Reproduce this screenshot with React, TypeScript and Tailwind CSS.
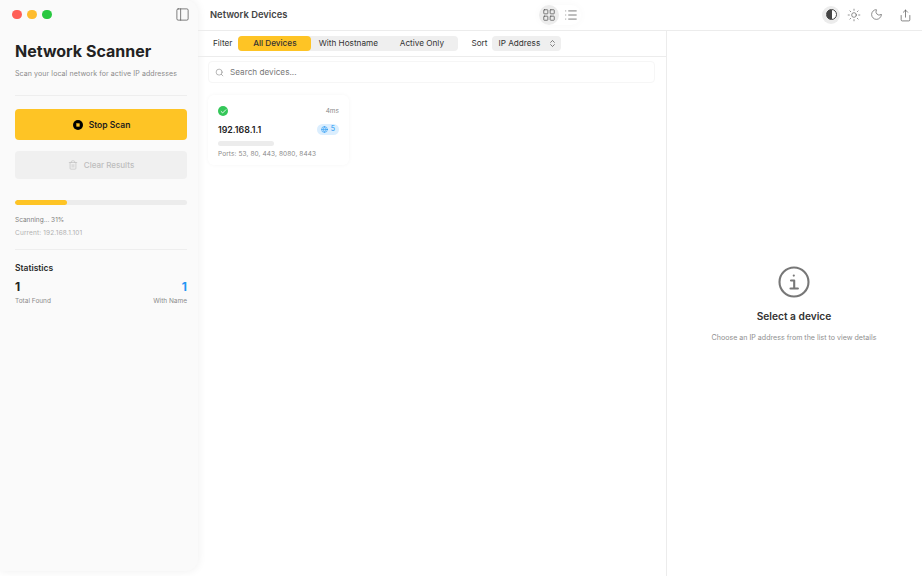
import { Check, ChevronsUpDown, Globe, LayoutGrid, List, Moon, PanelLeft, Search, Share, Square, Sun, Trash2 } from 'lucide-react';

function Sidebar() {
  return (
    <aside className="flex h-[571px] w-[198px] shrink-0 flex-col rounded-r-xl bg-[#fafafa] pl-[15px] pr-[11px] shadow-[0_0_10px_rgba(0,0,0,0.07)]">
      <div className="flex h-7 items-center justify-between pt-[1px]">
        <div className="-ml-[3px] flex gap-[5.5px]">
          <span className="h-[9.5px] w-[9.5px] rounded-full bg-[#ff5f57]" />
          <span className="h-[9.5px] w-[9.5px] rounded-full bg-[#febc2e]" />
          <span className="h-[9.5px] w-[9.5px] rounded-full bg-[#28c840]" />
        </div>
        <PanelLeft size={15} strokeWidth={1.2} className="-mr-[3px] text-[#555]" />
      </div>
      <h1 className="mt-[12px] text-[16px] font-bold leading-[22px] text-[#222]">Network Scanner</h1>
      <p className="mt-[6px] whitespace-nowrap text-[7px] leading-[12px] tracking-[0.1px] text-[#8a8a8a]">Scan your local network for active IP addresses</p>
      <div className="mt-[15px] h-px bg-[#eeeeee]" />
      <button className="mt-[13px] flex h-[31px] items-center justify-center gap-[6px] rounded-[4px] bg-[#fec425] pl-[1px] pt-[1px] text-[8.5px] font-semibold text-[#1c1c1c]">
        <span className="flex h-[10px] w-[10px] items-center justify-center rounded-full bg-black">
          <Square size={4} className="fill-[#fec425] text-[#fec425]" />
        </span>
        Stop Scan
      </button>
      <button className="mt-[11px] flex h-[28px] items-center justify-center gap-[6px] rounded-[4px] bg-[#f0f0f0] text-[8px] font-medium text-[#bdbdbd]">
        <Trash2 size={10} strokeWidth={1.5} />
        Clear Results
      </button>
      <div className="mt-[21px] h-[5px] overflow-hidden rounded-full bg-[#ececec]">
        <div className="h-full w-[30%] rounded-full bg-[#fec425]" />
      </div>
      <p className="mt-[10px] text-[6.5px] leading-[10px] text-[#7f7f7f]">Scanning... 31%</p>
      <p className="mt-[3px] text-[6.5px] leading-[10px] tracking-[0.15px] text-[#b0b0b0]">Current: 192.168.1.101</p>
      <div className="mt-[11px] h-px bg-[#eeeeee]" />
      <h2 className="mt-[12px] text-[8.5px] font-semibold leading-[12px] text-[#2a2a2a]">Statistics</h2>
      <div className="mt-[6px] flex justify-between">
        <div>
          <div className="text-[12px] font-bold leading-[14px] text-[#222]">1</div>
          <div className="mt-[2px] text-[6.5px] leading-[10px] text-[#8a8a8a]">Total Found</div>
        </div>
        <div className="text-right">
          <div className="text-[12px] font-bold leading-[14px] text-[#2196f3]">1</div>
          <div className="mt-[2px] text-[6.5px] leading-[10px] text-[#8a8a8a]">With Name</div>
        </div>
      </div>
    </aside>
  );
}

function TopBar() {
  return (
    <header className="flex h-[31px] items-center border-b border-[#ececec] pb-[1px] pl-3 pr-[10px]">
      <span className="mt-[1px] w-[329px] text-[9.4px] font-semibold text-[#444]">Network Devices</span>
      <div className="flex items-center gap-[2px] rounded-full shadow-[0_0_8px_rgba(0,0,0,0.03)]">
        <span className="flex h-[20px] w-[20px] items-center justify-center rounded-full bg-[#ececec]">
          <LayoutGrid size={14} strokeWidth={1.3} className="text-[#555]" />
        </span>
        <span className="flex h-[20px] w-[20px] items-center justify-center">
          <List size={14} strokeWidth={1.3} className="text-[#555]" />
        </span>
      </div>
      <div className="ml-auto flex items-center">
        <span className="flex h-[18px] w-[18px] items-center justify-center rounded-full bg-[#ececec]">
          <span className="h-[11px] w-[11px] rounded-full border border-[#444] bg-[linear-gradient(90deg,#444_50%,#fff_50%)]" />
        </span>
        <Sun size={14} strokeWidth={1.1} className="ml-[7px] text-[#555]" />
        <Moon size={13} strokeWidth={1.2} className="ml-[9px] text-[#555]" />
        <Share size={13} strokeWidth={1.3} className="ml-[16px] mt-[1px] text-[#555]" />
      </div>
    </header>
  );
}

function FilterBar() {
  return (
    <div className="flex h-[26px] items-center border-b border-[#ececec] pl-[15px] text-[8.2px] text-[#333]">
      <span>Filter</span>
      <div className="ml-[6px] flex h-[15px] w-[220px] items-center rounded-[4px] bg-[#efefef]">
        <span className="flex h-full w-[73px] items-center justify-center rounded-[4px] bg-[#fec425] font-medium">All Devices</span>
        <span className="flex w-[74px] justify-center">With Hostname</span>
        <span className="flex w-[73px] justify-center">Active Only</span>
      </div>
      <span className="ml-[13px]">Sort</span>
      <div className="ml-[5px] flex h-[15px] w-[69px] items-center justify-between rounded-[4px] bg-[#efefef] pl-[6px] pr-[4px]">
        IP Address
        <ChevronsUpDown size={9} strokeWidth={1.6} />
      </div>
    </div>
  );
}

function DeviceCard() {
  return (
    <div className="ml-[10px] mt-[12px] h-[70px] w-[141px] rounded-[6px] bg-white px-[10px] pt-[11px] shadow-[0_0_4px_rgba(0,0,0,0.04)]">
      <div className="flex items-center justify-between">
        <span className="flex h-[10px] w-[10px] items-center justify-center rounded-full bg-[#34c759]">
          <Check size={7} strokeWidth={3} className="text-white" />
        </span>
        <span className="mt-[1px] text-[6.5px] text-[#8a8a8a]">4ms</span>
      </div>
      <div className="mt-[6px] flex items-center justify-between">
        <span className="text-[8.8px] font-semibold text-[#222]">192.168.1.1</span>
        <span className="flex h-[11px] items-center gap-[3px] rounded-full bg-[#dbeefe] px-[4px] text-[7px] text-[#2196f3]">
          <Globe size={7} strokeWidth={2} />5
        </span>
      </div>
      <div className="mt-[5px] h-[5px] w-[56px] rounded-full bg-[#ececec]" />
      <p className="mt-[4px] whitespace-nowrap text-[6.5px] tracking-[0.1px] text-[#8a8a8a]">Ports: 53, 80, 443, 8080, 8443</p>
    </div>
  );
}

function InfoGlyph() {
  return (
    <svg width="32" height="32" viewBox="0 0 32 32" fill="none" stroke="#777" strokeWidth="2.1" strokeLinecap="round" strokeLinejoin="round">
      <circle cx="16" cy="16" r="14.5" />
      <path d="M13 14.5h3.2v8M12.5 22.5h7.4" />
      <circle cx="15.8" cy="9.6" r="1.1" fill="#777" stroke="none" />
    </svg>
  );
}

function DetailEmpty() {
  return (
    <section className="flex w-[256px] shrink-0 flex-col items-center justify-center border-l border-[#ececec] bg-white pr-[1px] pt-[3px]">
      <InfoGlyph />
      <h3 className="mt-[11px] text-[10.2px] font-semibold text-[#333]">Select a device</h3>
      <p className="mt-[9px] whitespace-nowrap text-[7.1px] text-[#8f8f8f]">Choose an IP address from the list to view details</p>
    </section>
  );
}

export default function App() {
  return (
    <div className="flex h-[576px] w-[922px] overflow-hidden bg-white font-['Inter',sans-serif]">
      <Sidebar />
      <main className="flex min-w-0 flex-1 flex-col">
        <TopBar />
        <div className="flex flex-1">
          <div className="flex-1">
            <FilterBar />
            <div className="ml-[10px] mr-[11px] mt-[4px] flex h-[22px] items-center gap-[6px] rounded-[4px] border border-[#f6f6f6] pl-[6px] text-[8.2px] text-[#777]">
              <Search size={9} strokeWidth={1.4} />
              Search devices...
            </div>
            <DeviceCard />
          </div>
          <DetailEmpty />
        </div>
      </main>
    </div>
  );
}
